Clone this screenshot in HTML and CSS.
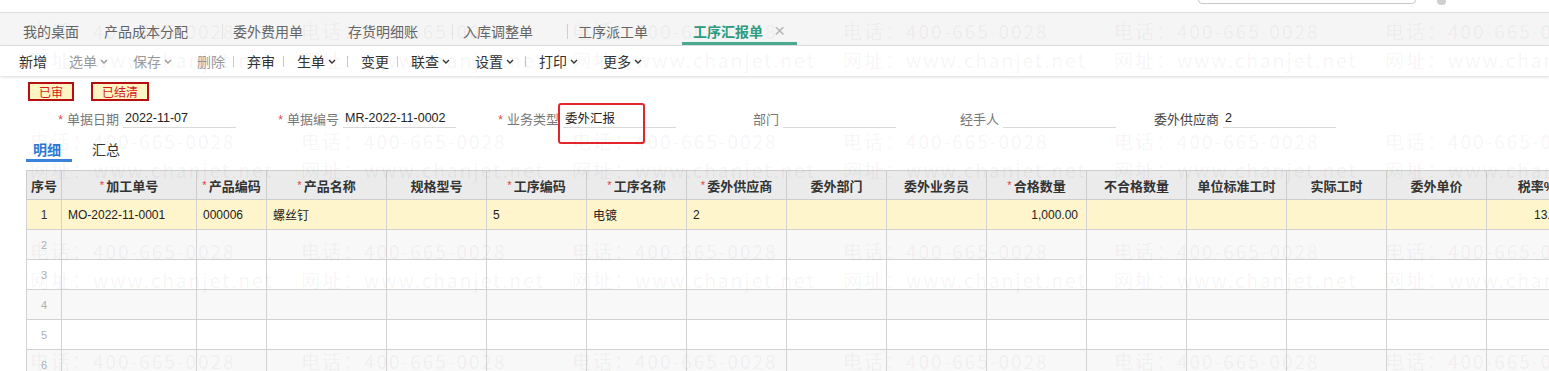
FILE: index.html
```html
<!DOCTYPE html>
<html lang="zh-CN">
<head>
<meta charset="utf-8">
<title>工序汇报单</title>
<link rel="stylesheet" href="styles.css">
</head>
<body>
<div class="topbar"><div class="search"></div><div class="topicon"></div></div>

<div class="tabbar">
  <span class="tab first">我的桌面</span>
  <span class="tab">产品成本分配</span>
  <span class="tab sep light">委外费用单</span>
  <span class="tab">存货明细账</span>
  <span class="tab sep light">入库调整单</span>
  <span class="tab sep">工序派工单</span>
  <span class="tab active">工序汇报单<span class="close">×</span></span>
</div>

<div class="toolbar">
  <span class="tb">新增</span>
  <span class="tb dd off">选单<svg class="chev" viewBox="0 0 8 5"><path d="M1 1l3 3 3-3"/></svg></span>
  <span class="tb dd off">保存<svg class="chev" viewBox="0 0 8 5"><path d="M1 1l3 3 3-3"/></svg></span>
  <span class="tb off">删除</span>
  <span class="tb sep">弃审</span>
  <span class="tb dd sep">生单<svg class="chev" viewBox="0 0 8 5"><path d="M1 1l3 3 3-3"/></svg></span>
  <span class="tb sep">变更</span>
  <span class="tb dd sep">联查<svg class="chev" viewBox="0 0 8 5"><path d="M1 1l3 3 3-3"/></svg></span>
  <span class="tb dd">设置<svg class="chev" viewBox="0 0 8 5"><path d="M1 1l3 3 3-3"/></svg></span>
  <span class="tb dd sep">打印<svg class="chev" viewBox="0 0 8 5"><path d="M1 1l3 3 3-3"/></svg></span>
  <span class="tb dd">更多<svg class="chev" viewBox="0 0 8 5"><path d="M1 1l3 3 3-3"/></svg></span>
</div>

<div class="status">
  <span class="badge">已审</span>
  <span class="badge">已结清</span>
</div>

<div class="form">
  <div class="field"><span class="label"><span class="req">*</span>单据日期</span><span class="input">2022-11-07</span></div>
  <div class="field"><span class="label"><span class="req">*</span>单据编号</span><span class="input">MR-2022-11-0002</span></div>
  <div class="field"><span class="label"><span class="req">*</span>业务类型</span><span class="input">委外汇报</span></div>
  <div class="field"><span class="label">部门</span><span class="input"></span></div>
  <div class="field"><span class="label">经手人</span><span class="input"></span></div>
  <div class="field"><span class="label dark">委外供应商</span><span class="input">2</span></div>
</div>

<div class="subtabs">
  <span class="st on">明细</span>
  <span class="st">汇总</span>
</div>

<div class="gridwrap">
<table class="grid">
  <colgroup>
    <col class="w35"><col class="w135"><col class="w70"><col class="w120">
    <col class="w100"><col class="w100"><col class="w100"><col class="w100">
    <col class="w100"><col class="w100"><col class="w100"><col class="w100">
    <col class="w100"><col class="w100"><col class="w100"><col class="w100">
  </colgroup>
  <thead>
    <tr>
      <th>序号</th>
      <th><span class="star">*</span>加工单号</th>
      <th><span class="star">*</span>产品编码</th>
      <th><span class="star">*</span>产品名称</th>
      <th>规格型号</th>
      <th><span class="star">*</span>工序编码</th>
      <th><span class="star">*</span>工序名称</th>
      <th><span class="star">*</span>委外供应商</th>
      <th>委外部门</th>
      <th>委外业务员</th>
      <th><span class="star">*</span>合格数量</th>
      <th>不合格数量</th>
      <th>单位标准工时</th>
      <th>实际工时</th>
      <th>委外单价</th>
      <th>税率%</th>
    </tr>
  </thead>
  <tbody>
    <tr class="r1">
      <td class="num">1</td><td>MO-2022-11-0001</td><td>000006</td><td>螺丝钉</td><td></td><td>5</td><td>电镀</td><td>2</td><td></td><td></td><td class="right">1,000.00</td><td></td><td></td><td></td><td></td><td class="right tax">13.00</td>
    </tr>
    <tr class="alt">
      <td class="num">2</td><td></td><td></td><td></td><td></td><td></td><td></td><td></td><td></td><td></td><td></td><td></td><td></td><td></td><td></td><td></td>
    </tr>
    <tr>
      <td class="num">3</td><td></td><td></td><td></td><td></td><td></td><td></td><td></td><td></td><td></td><td></td><td></td><td></td><td></td><td></td><td></td>
    </tr>
    <tr class="alt">
      <td class="num">4</td><td></td><td></td><td></td><td></td><td></td><td></td><td></td><td></td><td></td><td></td><td></td><td></td><td></td><td></td><td></td>
    </tr>
    <tr>
      <td class="num">5</td><td></td><td></td><td></td><td></td><td></td><td></td><td></td><td></td><td></td><td></td><td></td><td></td><td></td><td></td><td></td>
    </tr>
    <tr class="alt">
      <td class="num">6</td><td></td><td></td><td></td><td></td><td></td><td></td><td></td><td></td><td></td><td></td><td></td><td></td><td></td><td></td><td></td>
    </tr>
  </tbody>
</table>
</div>

<div class="annot"></div>

<div class="wm">
  <span>电话：400-665-0028</span><span>电话：400-665-0028</span><span>电话：400-665-0028</span><span>电话：400-665-0028</span><span>电话：400-665-0028</span><span>电话：400-665-0028</span>
  <span>网址：www.chanjet.net</span><span>网址：www.chanjet.net</span><span>网址：www.chanjet.net</span><span>网址：www.chanjet.net</span><span>网址：www.chanjet.net</span><span>网址：www.chanjet.net</span>
  <span>电话：400-665-0028</span><span>电话：400-665-0028</span><span>电话：400-665-0028</span><span>电话：400-665-0028</span><span>电话：400-665-0028</span><span>电话：400-665-0028</span>
  <span>网址：www.chanjet.net</span><span>网址：www.chanjet.net</span><span>网址：www.chanjet.net</span><span>网址：www.chanjet.net</span><span>网址：www.chanjet.net</span><span>网址：www.chanjet.net</span>
  <span>电话：400-665-0028</span><span>电话：400-665-0028</span><span>电话：400-665-0028</span><span>电话：400-665-0028</span><span>电话：400-665-0028</span><span>电话：400-665-0028</span>
  <span>网址：www.chanjet.net</span><span>网址：www.chanjet.net</span><span>网址：www.chanjet.net</span><span>网址：www.chanjet.net</span><span>网址：www.chanjet.net</span><span>网址：www.chanjet.net</span>
  <span>电话：400-665-0028</span><span>电话：400-665-0028</span><span>电话：400-665-0028</span><span>电话：400-665-0028</span><span>电话：400-665-0028</span><span>电话：400-665-0028</span>
</div>
</body>
</html>
```

FILE: styles.css
```css
* { box-sizing: border-box; }
html, body { margin: 0; padding: 0; }
body {
  width: 1549px;
  height: 371px;
  overflow: hidden;
  position: relative;
  background: #fff;
  font-family: "Liberation Sans", "Noto Sans CJK SC", sans-serif;
  font-size: 13px;
  color: #333;
}

/* top strip */
.topbar { height: 12px; overflow: hidden; display: flex; padding-left: 1198px; }
.search { flex: none; width: 218px; height: 24px; margin-top: -20px; border: 1px solid #c9c9c9; border-radius: 4px; }
.topicon { flex: none; width: 9px; height: 5px; margin-left: 21px; border-radius: 0 0 4px 4px; background: #cfcfcf; }

/* tab bar */
.tabbar {
  height: 34px;
  border-top: 1px solid #dedede;
  border-bottom: 1px solid #e3e3e3;
  background: #f5f5f5;
  display: flex;
  padding: 6px 0 0 23px;
  font-size: 14px;
  color: #666;
}
.tab {
  position: relative;
  display: flex;
  align-items: center;
  white-space: nowrap;
  margin-right: 45px;
  border-bottom: 3px solid transparent;
}
.tab.first { margin-right: 25px; }
.tab.sep::before {
  content: "";
  position: absolute;
  left: -11px;
  top: 5px;
  height: 15px;
  border-left: 1px solid #cfcfcf;
}
.tab.sep.light::before { border-left-color: #e2e2e2; }
.tab.active {
  margin-left: -11px;
  padding: 0 12px 0 11px;
  color: #2f9d80;
  font-weight: bold;
  border-bottom-color: #4aaa92;
}
.close { font-weight: normal; color: #b4b4b4; margin-left: 11px; font-size: 19px; line-height: 1; }

/* toolbar */
.toolbar {
  position: relative;
  height: 30px;
  display: flex;
  align-items: center;
  padding-left: 19px;
  font-size: 14px;
  color: #333;
  box-shadow: 0 1px 3px rgba(0, 0, 0, 0.16);
}
.tb { flex: none; width: 50px; position: relative; display: flex; align-items: center; white-space: nowrap; }
.tb.dd { width: 64px; }
.tb.off { color: #9a9a9a; }
.tb.sep::before {
  content: "";
  position: absolute;
  left: -14px;
  top: 50%;
  margin-top: -5px;
  height: 11px;
  border-left: 1px solid #c8c8c8;
}
.chev { width: 8px; height: 5px; margin-left: 3px; }
.chev path { fill: none; stroke: currentColor; stroke-width: 1.4; }

/* status badges */
.status { display: flex; gap: 17px; padding: 6px 0 0 28px; }
.badge {
  height: 19px;
  padding: 0 9px;
  border: 2px solid #b51010;
  background: #fff4c4;
  color: #d41a1a;
  font-size: 12px;
  display: flex;
  align-items: center;
}

/* form */
.form { display: flex; padding-left: 16px; margin-top: 7px; }
.field { flex: none; width: 220px; height: 20px; display: flex; align-items: center; }
.label { flex: none; width: 107px; padding-right: 4px; text-align: right; color: #777; white-space: nowrap; }
.label.dark { color: #444; }
.req { color: #e2454c; margin-right: 4px; font-size: 12px; }
.input {
  flex: none;
  width: 113px;
  height: 20px;
  padding-left: 2px;
  border-bottom: 1px solid #dadada;
  display: flex;
  align-items: center;
  color: #222;
  font-size: 12.5px;
  white-space: nowrap;
}

/* sub tabs */
.subtabs { display: flex; gap: 13px; padding-left: 26px; margin-top: 10px; font-size: 14px; }
.st { height: 24px; padding: 0 11px 0 7px; display: flex; align-items: center; border-bottom: 3px solid transparent; color: #333; }
.st.on { color: #2d79d4; font-weight: bold; border-bottom-color: #3a82db; }

/* grid */
.gridwrap { margin: 8px 0 0 26px; }
.grid { border-collapse: collapse; table-layout: fixed; width: 1560px; }
.w35 { width: 35px; }
.w70 { width: 70px; }
.w100 { width: 100px; }
.w120 { width: 120px; }
.w135 { width: 135px; }
.grid th {
  height: 29px;
  padding: 0 4px;
  background: #ebebeb;
  border: 1px solid #cdcdcd;
  font-size: 13px;
  font-weight: bold;
  color: #333;
  text-align: center;
  white-space: nowrap;
  overflow: hidden;
}
.star { color: #e23c3c; font-weight: normal; font-size: 11px; margin-right: 2px; position: relative; top: -2px; }
.grid td {
  height: 30px;
  padding: 0 6px;
  border: 1px solid #d2d2d2;
  font-size: 12px;
  color: #222;
  white-space: nowrap;
  overflow: hidden;
  background: #fff;
}
.grid .r1 td { background: #fff5cc; }
.grid .alt td { background: #f8f8f8; }
.grid td.num { text-align: center; color: #b0b0b0; font-size: 11px; padding: 0; }
.grid .r1 td.num { color: #333; font-size: 12px; }
.grid td.right { text-align: right; padding-right: 8px; }
.grid td.tax { padding-right: 22px; }

/* annotation box */
.annot {
  position: absolute;
  left: 558px;
  top: 103px;
  width: 87px;
  height: 41px;
  border: 2px solid #e2262b;
  border-radius: 3px;
  pointer-events: none;
}

/* watermark */
.wm {
  position: absolute;
  left: 0;
  top: 0;
  display: grid;
  grid-template-columns: repeat(6, 271px);
  grid-template-rows: repeat(4, 29px 81px);
  padding: 21px 0 0 30px;
  pointer-events: none;
  font-family: "Noto Sans CJK SC", sans-serif;
  font-size: 19px;
  letter-spacing: 2px;
  line-height: 20px;
  color: rgba(0, 0, 0, 0.055);
  white-space: nowrap;
}
```
